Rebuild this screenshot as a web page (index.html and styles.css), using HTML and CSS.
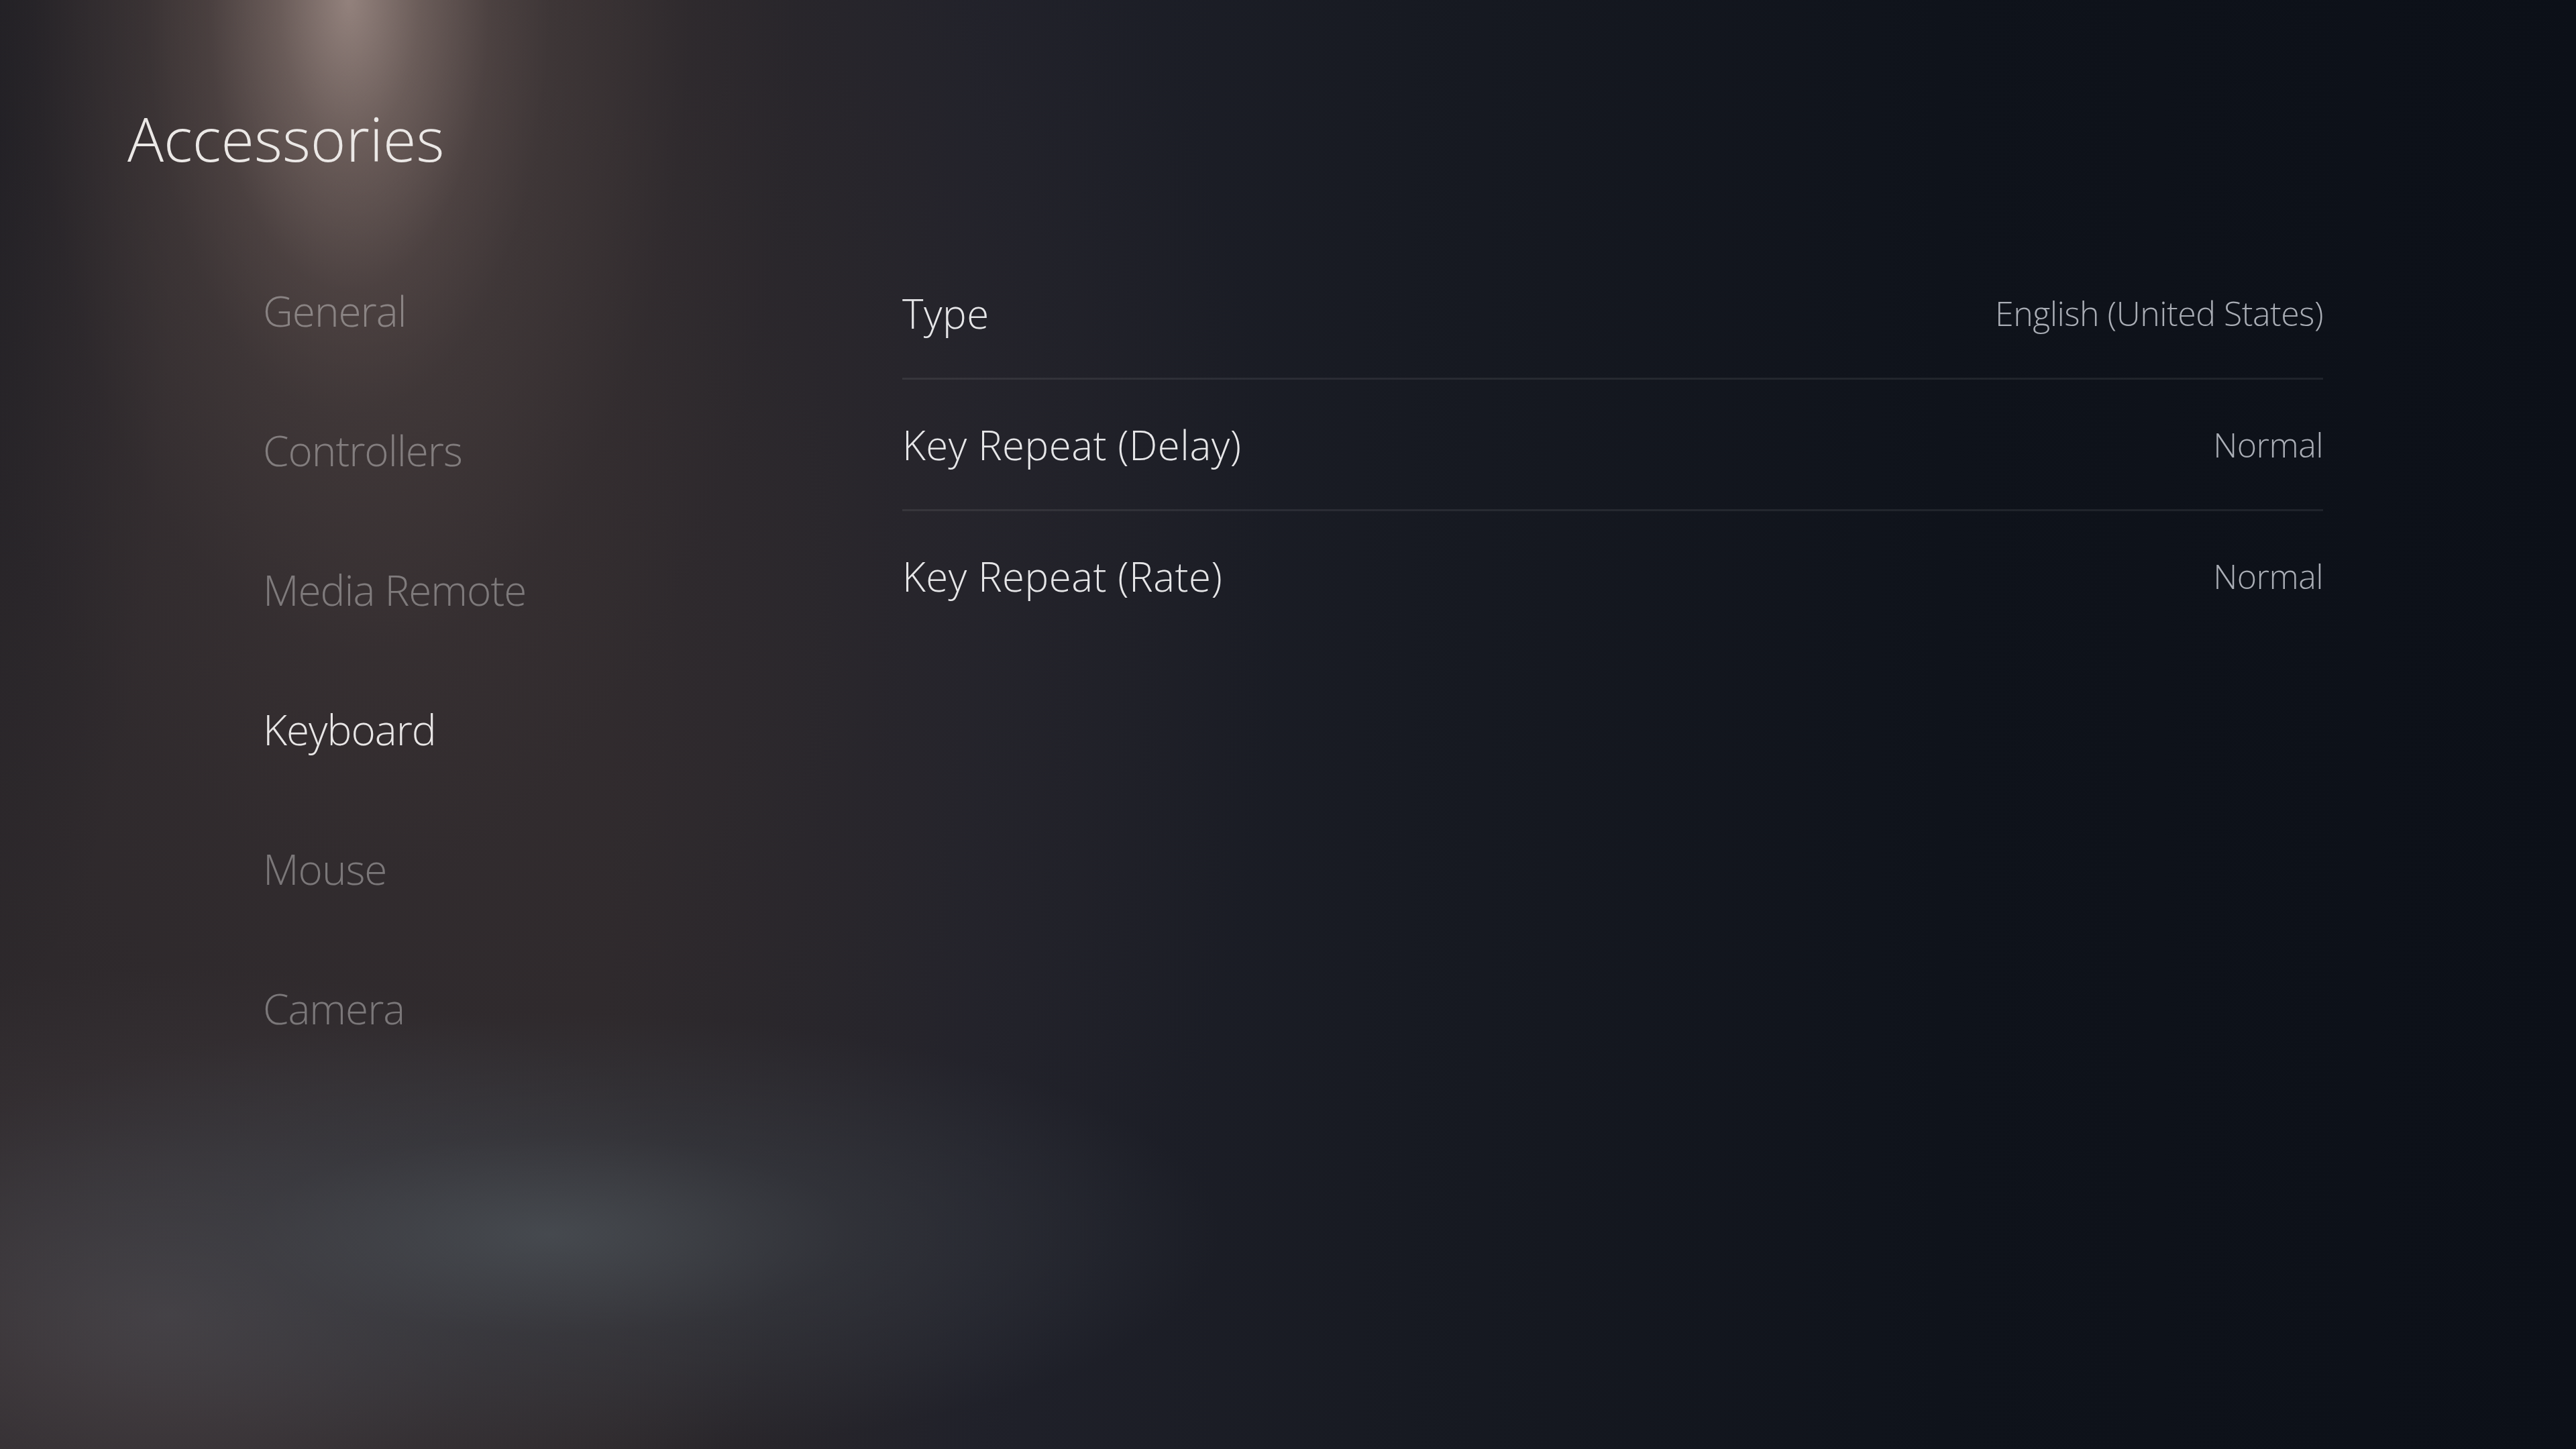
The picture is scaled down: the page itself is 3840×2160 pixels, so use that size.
FILE: index.html
```html
<!DOCTYPE html>
<html lang="en">
<head>
<meta charset="utf-8">
<title>Accessories</title>
<link rel="stylesheet" href="styles.css">
</head>
<body>
<div class="page">
  <h1 class="title">Accessories</h1>
  <div class="main">
    <ul class="nav">
      <li class="nav-item">General</li>
      <li class="nav-item">Controllers</li>
      <li class="nav-item">Media Remote</li>
      <li class="nav-item active">Keyboard</li>
      <li class="nav-item">Mouse</li>
      <li class="nav-item">Camera</li>
    </ul>
    <div class="content">
      <div class="row">
        <span class="label">Type</span>
        <span class="value">English (United States)</span>
      </div>
      <div class="row">
        <span class="label">Key Repeat (Delay)</span>
        <span class="value">Normal</span>
      </div>
      <div class="row last">
        <span class="label">Key Repeat (Rate)</span>
        <span class="value">Normal</span>
      </div>
    </div>
  </div>
</div>
</body>
</html>
```
FILE: styles.css
```css
html, body {
  margin: 0;
  padding: 0;
}
body {
  width: 3840px;
  height: 2160px;
  overflow: hidden;
  font-family: "Open Sans", "Noto Sans", sans-serif;
  font-weight: 300;
  background-color: #12151c;
  background-image:
    radial-gradient(ellipse 300px 620px at 520px 0px, rgba(175,155,148,0.7) 0%, rgba(150,130,123,0.42) 35%, rgba(120,100,95,0.15) 70%, rgba(0,0,0,0) 100%),
    radial-gradient(ellipse 650px 1300px at 540px 0px, rgba(110,94,90,0.55) 0%, rgba(90,77,74,0.35) 45%, rgba(70,60,60,0.12) 75%, rgba(0,0,0,0) 100%),
    radial-gradient(ellipse 1000px 330px at 820px 1840px, rgba(74,80,86,0.8) 0%, rgba(60,65,72,0.45) 45%, rgba(0,0,0,0) 100%),
    radial-gradient(ellipse 900px 520px at 250px 1960px, rgba(80,74,78,0.75) 0%, rgba(66,60,64,0.4) 55%, rgba(0,0,0,0) 100%),
    radial-gradient(ellipse 1300px 1700px at 600px 900px, rgba(58,50,52,0.6) 0%, rgba(50,44,47,0.35) 55%, rgba(0,0,0,0) 100%),
    radial-gradient(ellipse 260px 1300px at 0px 200px, rgba(15,18,26,0.65) 0%, rgba(0,0,0,0) 100%),
    linear-gradient(90deg, #2b272a 0px, #2b272a 900px, #20212a 1450px, #171a22 2100px, #0f131b 2900px, #0c1018 3840px);
}
.page {
  display: flex;
  flex-direction: column;
}
.title {
  margin: 161px 0 0 190px;
  font-size: 90px;
  line-height: 90px;
  font-weight: 300;
  color: #ebe8e6;
}
.main {
  display: flex;
  margin-top: 108px;
}
.nav {
  list-style: none;
  margin: 0;
  padding: 0 0 0 392px;
  width: 953px;
}
.nav-item {
  height: 208px;
  line-height: 208px;
  font-size: 62px;
  letter-spacing: -1px;
  color: rgba(255,255,255,0.36);
  white-space: nowrap;
}
.nav-item.active {
  color: #e8e6e6;
}
.content {
  width: 2118px;
  padding-top: 11px;
}
.row {
  display: flex;
  justify-content: space-between;
  align-items: center;
  height: 193px;
  border-bottom: 3px solid rgba(255,255,255,0.08);
}
.row.last {
  border-bottom-color: transparent;
}
.label {
  font-size: 60px;
  letter-spacing: 0.5px;
  color: #e6e6e8;
}
.value {
  font-size: 50px;
  letter-spacing: -0.5px;
  color: #a9adb5;
}
```
